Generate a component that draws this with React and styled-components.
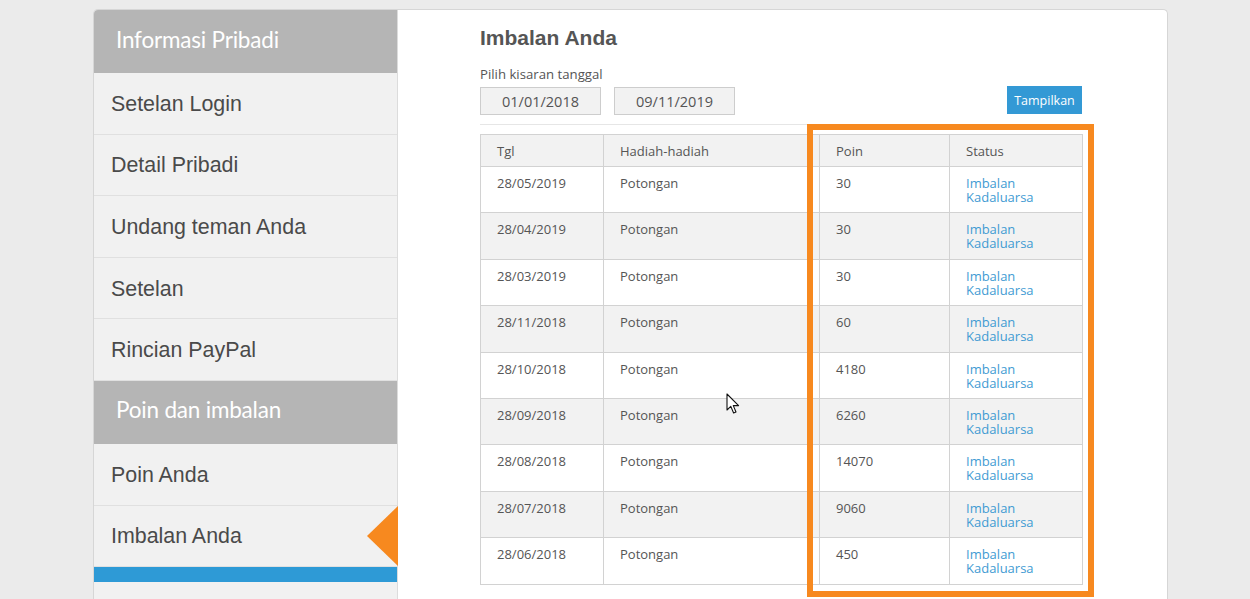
import React from 'react'
import styled, { createGlobalStyle } from 'styled-components'

const GlobalStyle = createGlobalStyle`
  html, body {
    margin: 0;
    padding: 0;
    background: #ebebeb;
    overflow: hidden;
  }
  body {
    font-family: 'Open Sans', 'Liberation Sans', sans-serif;
  }
`

const sideItems = [
  { type: 'head', label: 'Informasi Pribadi' },
  { type: 'item', label: 'Setelan Login' },
  { type: 'item', label: 'Detail Pribadi' },
  { type: 'item', label: 'Undang teman Anda' },
  { type: 'item', label: 'Setelan' },
  { type: 'item', label: 'Rincian PayPal' },
  { type: 'head', label: 'Poin dan imbalan' },
  { type: 'item', label: 'Poin Anda' },
  { type: 'item', label: 'Imbalan Anda', active: true }
]

const rows = [
  ['28/05/2019', '30'],
  ['28/04/2019', '30'],
  ['28/03/2019', '30'],
  ['28/11/2018', '60'],
  ['28/10/2018', '4180'],
  ['28/09/2018', '6260'],
  ['28/08/2018', '14070'],
  ['28/07/2018', '9060'],
  ['28/06/2018', '450']
]

const App = () => (
  <Page>
    <GlobalStyle />
    <Card>
      <Sidebar>
        {sideItems.map(it =>
          it.type === 'head' ? (
            <SideHead key={it.label}>{it.label}</SideHead>
          ) : (
            <SideItem key={it.label}>
              {it.label}
              {it.active && <Pointer />}
            </SideItem>
          )
        )}
        <BlueBar />
        <SideRest />
      </Sidebar>
      <Main>
        <Title>Imbalan Anda</Title>
        <Label>Pilih kisaran tanggal</Label>
        <FilterRow>
          <Dates>
            <DateBox>01/01/2018</DateBox>
            <DateBox>09/11/2019</DateBox>
          </Dates>
          <ShowButton>Tampilkan</ShowButton>
        </FilterRow>
        <TableWrap>
          <Table>
            <colgroup>
              <col style={{ width: 123 }} />
              <col style={{ width: 216 }} />
              <col style={{ width: 130 }} />
              <col style={{ width: 133 }} />
            </colgroup>
            <thead>
              <tr>
                <Th>Tgl</Th>
                <Th>Hadiah-hadiah</Th>
                <Th>Poin</Th>
                <Th>Status</Th>
              </tr>
            </thead>
            <tbody>
              {rows.map(([date, pts], i) => (
                <Row key={date} $shaded={i % 2 === 1}>
                  <Td>{date}</Td>
                  <Td>Potongan</Td>
                  <Td>{pts}</Td>
                  <Td>
                    <StatusLink>
                      Imbalan
                      <br />
                      Kadaluarsa
                    </StatusLink>
                  </Td>
                </Row>
              ))}
            </tbody>
          </Table>
          <Highlight />
        </TableWrap>
        <Cursor viewBox='0 0 14 22' width='14' height='22'>
          <path
            d='M1 1 L1 17 L4.8 13.4 L7.6 20 L10 19 L7.3 12.6 L12.6 12.6 Z'
            fill='#fff'
            stroke='#111'
            strokeWidth='1.1'
            strokeLinejoin='round'
          />
        </Cursor>
      </Main>
    </Card>
  </Page>
)

export default App

const Page = styled.div`
  padding: 9px 0 0 93px;
  height: 599px;
  box-sizing: border-box;
`

const Card = styled.div`
  width: 1075px;
  height: 590px;
  box-sizing: border-box;
  display: flex;
  background: #fff;
  border: 1px solid #d6d6d6;
  border-bottom: none;
  border-radius: 5px 5px 0 0;
  overflow: hidden;
`

const Sidebar = styled.div`
  width: 303px;
  flex-shrink: 0;
  display: flex;
  flex-direction: column;
  background: #f1f1f1;
  border-right: 1px solid #dcdcdc;
`

const SideHead = styled.div`
  height: 63px;
  flex-shrink: 0;
  box-sizing: border-box;
  display: flex;
  align-items: center;
  padding: 0 0 5px 22px;
  background: #b5b5b5;
  color: #fff;
  font-family: Lato, 'Open Sans', sans-serif;
  font-size: 22.5px;
  letter-spacing: -0.2px;
`

const SideItem = styled.div`
  position: relative;
  height: 61.6px;
  flex-shrink: 0;
  box-sizing: border-box;
  display: flex;
  align-items: center;
  padding: 2px 0 0 17px;
  border-bottom: 1px solid #e0e0e0;
  color: #4a4a4a;
  font-family: 'Liberation Sans', Arial, sans-serif;
  font-size: 21.4px;
`

const Pointer = styled.span`
  position: absolute;
  right: -1px;
  top: 50%;
  transform: translateY(-50%);
  width: 0;
  height: 0;
  border-top: 30px solid transparent;
  border-bottom: 30px solid transparent;
  border-right: 31px solid #f7891f;
`

const BlueBar = styled.div`
  height: 15px;
  flex-shrink: 0;
  background: #2e9ad6;
`

const SideRest = styled.div`
  flex: 1;
`

const Main = styled.div`
  position: relative;
  flex: 1;
  padding: 15px 0 0 82px;
`

const Title = styled.h1`
  margin: 0;
  font-family: 'Liberation Sans', Arial, sans-serif;
  font-size: 21px;
  line-height: 26px;
  font-weight: bold;
  color: #555;
`

const Label = styled.div`
  margin-top: 14px;
  font-size: 13.2px;
  line-height: 18px;
  color: #555;
`

const FilterRow = styled.div`
  width: 602px;
  display: flex;
  justify-content: space-between;
  align-items: flex-start;
  margin-top: 3px;
  padding-bottom: 9px;
  border-bottom: 1px solid #e6e6e6;
`

const Dates = styled.div`
  display: flex;
  gap: 13px;
  padding-top: 1px;
`

const DateBox = styled.div`
  width: 121px;
  height: 28px;
  box-sizing: border-box;
  display: flex;
  align-items: center;
  justify-content: center;
  background: #f2f2f2;
  border: 1px solid #cdcdcd;
  color: #555;
  font-size: 14.5px;
`

const ShowButton = styled.div`
  width: 75px;
  height: 28px;
  display: flex;
  align-items: center;
  justify-content: center;
  background: #3399d5;
  color: #fff;
  font-size: 12.5px;
`

const TableWrap = styled.div`
  position: relative;
  width: 602px;
  margin-top: 9px;
`

const Table = styled.table`
  width: 602px;
  border-collapse: collapse;
  table-layout: fixed;
  font-size: 13px;
  color: #555;
`

const Th = styled.th`
  height: 32px;
  padding: 0 16px;
  box-sizing: border-box;
  text-align: left;
  font-weight: normal;
  background: #f2f2f2;
  border: 1px solid #d2d2d2;
`

const Row = styled.tr`
  height: 46.4px;
  background: ${p => (p.$shaded ? '#f2f2f2' : '#fff')};
`

const Td = styled.td`
  padding: 9px 16px 0;
  vertical-align: top;
  line-height: 14px;
  border: 1px solid #d2d2d2;
`

const StatusLink = styled.span`
  color: #3f9bd3;
`

const Highlight = styled.div`
  position: absolute;
  left: 327px;
  top: -10px;
  right: -12px;
  bottom: -12px;
  border: 6px solid #f7891f;
  pointer-events: none;
`

const Cursor = styled.svg`
  position: absolute;
  left: 328px;
  top: 383px;
`
